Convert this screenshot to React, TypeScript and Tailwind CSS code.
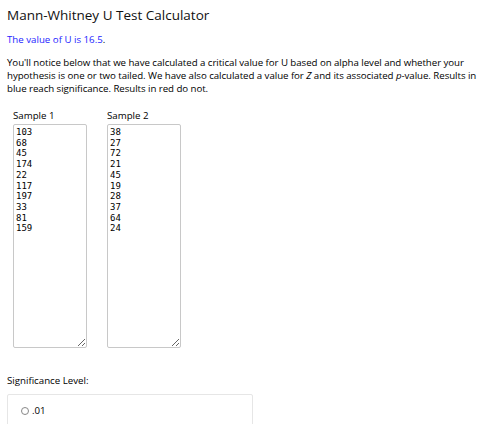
import React from "react";

export default function App() {
  const s1 = ["103", "68", "45", "174", "22", "117", "197", "33", "81", "159"].join("\n");
  const s2 = ["38", "27", "72", "21", "45", "19", "28", "37", "64", "24"].join("\n");
  const ta =
    "w-[74px] h-[224px] mt-[2px] border border-[#c8c8c8] rounded-[2px] px-[2px] pt-[2px] text-[9px] leading-[10.7px] font-['DejaVu_Sans_Mono',monospace] text-black resize outline-none";
  return (
    <div className="w-[493px] h-[424px] overflow-hidden bg-white text-black font-['Open_Sans',sans-serif]">
      <div className="pl-[7px] pr-[6px] pt-[6px]">
        <h1 className="text-[13.5px] leading-[18px] font-normal text-[#111]">Mann-Whitney U Test Calculator</h1>
        <p className="mt-[9px] text-[9.7px] leading-[13px] font-medium text-[#2424ff]">
          The value of U is 16.5<span className="text-black">.</span>
        </p>
        <p className="mt-[10px] text-[9.7px] leading-[13px] font-medium text-black tracking-[-0.05px]">
          You'll notice below that we have calculated a critical value for U based on alpha level and whether your hypothesis is one or two tailed. We have also calculated a value for <i>Z</i> and its associated <i>p</i>-value. Results in blue reach significance. Results in red do not.
        </p>
        <div className="mt-[15px] ml-[6px] flex gap-[20px]">
          <div className="flex flex-col">
            <span className="text-[9.7px] leading-[12px] font-medium text-black">Sample 1</span>
            <textarea readOnly value={s1} className={ta} />
          </div>
          <div className="flex flex-col">
            <span className="text-[9.7px] leading-[12px] font-medium text-black">Sample 2</span>
            <textarea readOnly value={s2} className={ta} />
          </div>
        </div>
        <p className="mt-[26px] text-[9.7px] leading-[13px] font-medium text-black">Significance Level:</p>
        <div className="mt-[7px] w-[246px] h-[40px] border border-[#e6e6e6] rounded-[2px] pl-[13px] pt-[9px] flex items-start gap-[3px]">
          <span className="mt-[3px] w-[8px] h-[8px] rounded-full border border-[#888] bg-white" />
          <span className="text-[9.7px] leading-[13px] font-medium text-black">.01</span>
        </div>
      </div>
    </div>
  );
}
